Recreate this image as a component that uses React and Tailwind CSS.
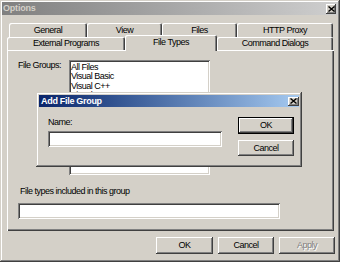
import React from 'react';

const raised =
  'shadow-[inset_-1px_-1px_0_#404040,inset_1px_1px_0_#ffffff,inset_-2px_-2px_0_#808080,inset_2px_2px_0_#d4d0c8]';
const sunken =
  'shadow-[inset_1px_1px_0_#808080,inset_-1px_-1px_0_#ffffff,inset_2px_2px_0_#404040,inset_-2px_-2px_0_#d4d0c8]';
const tabEdge =
  'shadow-[inset_1px_1px_0_#ffffff,inset_-1px_0_0_#404040,inset_-2px_0_0_#808080]';

const CloseBox = ({ className }) => (
  <div className={`flex items-center justify-center bg-[#d4d0c8] ${raised} ${className}`}>
    <svg width="7" height="6" viewBox="0 0 7 6">
      <path d="M0.5 0.5 L6.5 5.5 M6.5 0.5 L0.5 5.5" stroke="#000" strokeWidth="1.4" />
    </svg>
  </div>
);

const Tab = ({ label, w, h }) => (
  <div
    className={`flex items-center justify-center rounded-t-[2px] bg-[#d4d0c8] ${tabEdge}`}
    style={{ width: w, height: h }}
  >
    {label}
  </div>
);

const Button = ({ children, w, h, disabled, isDefault }) => (
  <div
    className={`flex items-center justify-center bg-[#d4d0c8] ${isDefault ? 'border border-black' : ''} ${raised} ${
      disabled ? 'text-[#808080] [text-shadow:1px_1px_0_#ffffff]' : 'text-black'
    }`}
    style={{ width: w, height: h }}
  >
    {children}
  </div>
);

export default function App() {
  return (
    <div className="relative w-[340px] h-[262px] bg-[#d4d0c8] flex flex-col px-[2px] pt-[2px] text-[9px] leading-[11px] tracking-[-0.5px] text-black font-['Liberation_Sans',Arial,sans-serif] shadow-[inset_-1px_-1px_0_#404040,inset_1px_1px_0_#d4d0c8,inset_-2px_-2px_0_#808080,inset_2px_2px_0_#ffffff]">
      {/* title bar */}
      <div className="h-[13px] flex items-center justify-between pl-[1px] pr-[2px] bg-gradient-to-r from-[#808080] to-[#cfcfcf]">
        <span className="font-bold text-[#d4d0c8] tracking-[-0.2px]">Options</span>
        <CloseBox className="w-[10px] h-[10px]" />
      </div>

      {/* tabs */}
      <div className="mt-[8px] ml-[7px] flex">
        <Tab label="General" w={78} h={14} />
        <Tab label="View" w={75} h={14} />
        <Tab label="Files" w={75} h={14} />
        <Tab label="HTTP Proxy" w={96} h={14} />
      </div>
      <div className="ml-[5px] h-[13px] flex">
        <Tab label="External Programs" w={118} h={13} />
        <div
          className={`relative z-10 -mt-[2px] w-[92px] h-[16px] flex items-start justify-center pt-[2px] rounded-t-[2px] bg-[#d4d0c8] ${tabEdge}`}
        >
          File Types
        </div>
        <Tab label="Command Dialogs" w={116} h={13} />
      </div>

      {/* panel */}
      <div
        className={`ml-[5px] w-[327px] h-[181px] flex flex-col pt-[10px] pl-[11px] shadow-[inset_1px_1px_0_#ffffff,inset_-1px_-1px_0_#404040,inset_-2px_-2px_0_#808080]`}
      >
        <div className="flex">
          <div className="w-[51px]">File Groups:</div>
          <div className={`w-[141px] h-[115px] bg-white pl-[2px] pt-[3px] leading-[9.3px] ${sunken}`}>
            <div>All Files</div>
            <div>Visual Basic</div>
            <div>Visual C++</div>
            <div>Visual FoxPro</div>
          </div>
        </div>
        <div className="mt-[11px] ml-[2px]">File types included in this group</div>
        <div className={`mt-[6px] w-[262px] h-[16px] bg-white ${sunken}`} />
      </div>

      {/* bottom buttons */}
      <div className="mt-[6px] mr-[3px] flex justify-end gap-[5px]">
        <Button w={57} h={17}>OK</Button>
        <Button w={56} h={17}>Cancel</Button>
        <Button w={56} h={17} disabled>Apply</Button>
      </div>

      {/* Add File Group dialog */}
      <div className="absolute left-[36px] top-[92px] w-[266px] h-[75px] bg-[#d4d0c8] flex flex-col p-[3px] shadow-[inset_-1px_-1px_0_#404040,inset_1px_1px_0_#d4d0c8,inset_-2px_-2px_0_#808080,inset_2px_2px_0_#ffffff]">
        <div className="h-[12px] flex items-center justify-between pl-[2px] bg-gradient-to-r from-[#0a246a] to-[#a6caf0]">
          <span className="font-bold text-white tracking-[-0.3px]">Add File Group</span>
          <CloseBox className="w-[11px] h-[9px]" />
        </div>
        <div className="flex justify-between">
          <div className="pl-[9px] pt-[10px] flex flex-col">
            <div>Name:</div>
            <div className={`mt-[3px] w-[174px] h-[16px] bg-white ${sunken}`} />
          </div>
          <div className="pt-[10px] pr-[5px] flex flex-col gap-[6px]">
            <Button w={56} h={17} isDefault>OK</Button>
            <Button w={56} h={16}>Cancel</Button>
          </div>
        </div>
      </div>
    </div>
  );
}
